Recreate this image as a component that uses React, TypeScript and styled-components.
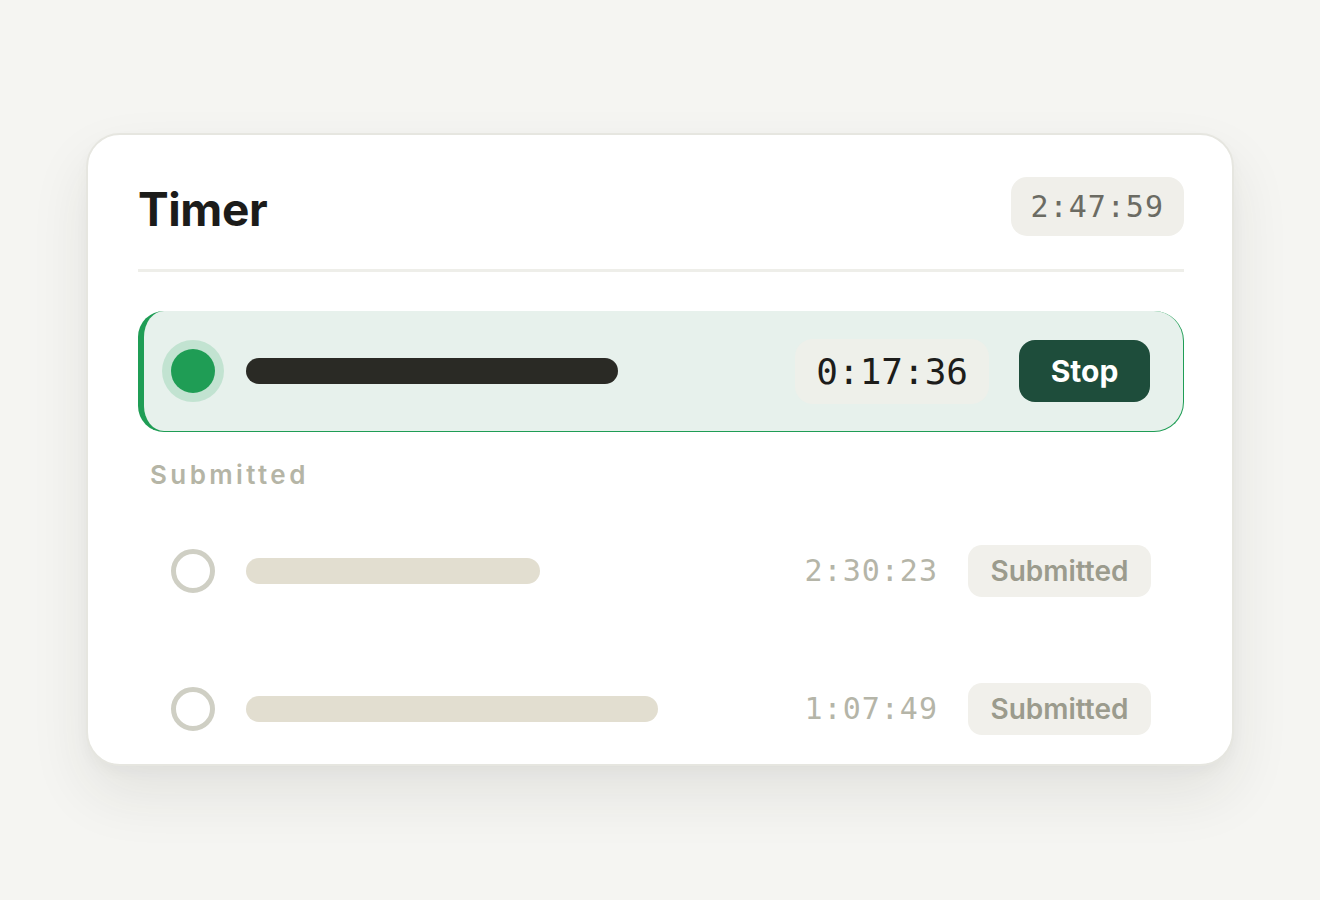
import styled, { createGlobalStyle } from "styled-components";

const GlobalStyle = createGlobalStyle`
  html, body {
    margin: 0;
    padding: 0;
    background: #f5f5f2;
    font-family: Inter, "Noto Sans", sans-serif;
  }
`;

interface Entry {
  time: string;
  width: number;
}

const submitted: Entry[] = [
  { time: "2:30:23", width: 294 },
  { time: "1:07:49", width: 412 },
];

export default function App() {
  return (
    <>
      <GlobalStyle />
      <Page>
        <Card>
          <Header>
            <Title>Timer</Title>
            <TotalPill>2:47:59</TotalPill>
          </Header>
          <Divider />
          <ActiveRow>
            <DotSlot>
              <LiveDot />
            </DotSlot>
            <Bar $w={372} $active />
            <Spacer />
            <TimePill>0:17:36</TimePill>
            <StopButton>Stop</StopButton>
          </ActiveRow>
          <SectionLabel>Submitted</SectionLabel>
          <List>
            {submitted.map((e) => (
              <Row key={e.time}>
                <DotSlot>
                  <EmptyDot />
                </DotSlot>
                <Bar $w={e.width} />
                <Spacer />
                <DoneTime>{e.time}</DoneTime>
                <Badge>Submitted</Badge>
              </Row>
            ))}
          </List>
        </Card>
      </Page>
    </>
  );
}

const Page = styled.div`
  padding: 133px 0 0 86px;
  width: 1320px;
  height: 900px;
  box-sizing: border-box;
`;

const Card = styled.div`
  width: 1148px;
  height: 633px;
  box-sizing: border-box;
  background: #ffffff;
  border: 2px solid #e6e6e0;
  border-radius: 34px;
  padding: 42px 48px 0 50px;
  overflow: hidden;
  box-shadow: 0 28px 60px rgba(40, 44, 38, 0.09), 0 6px 14px rgba(40, 44, 38, 0.03);
`;

const Header = styled.div`
  display: flex;
  align-items: center;
  justify-content: space-between;
  height: 59px;
`;

const Title = styled.h1`
  margin: 0;
  font-size: 46px;
  font-weight: 700;
  letter-spacing: -0.4px;
  color: #1c1c1a;
  line-height: 1;
  padding-top: 4px;
`;

const TotalPill = styled.div`
  height: 59px;
  box-sizing: border-box;
  padding: 0 20px;
  display: flex;
  align-items: center;
  background: #f0efea;
  border-radius: 16px;
  font-family: "DejaVu Sans Mono", monospace;
  font-size: 30px;
  letter-spacing: 1px;
  color: #6b6b63;
`;

const Divider = styled.div`
  height: 3px;
  background: #eeeee9;
  margin: 33px 0 39px;
`;

const ActiveRow = styled.div`
  display: flex;
  align-items: center;
  height: 121px;
  box-sizing: border-box;
  background: #e7f1ec;
  border-radius: 26px 30px 30px 26px;
  border-left: 6px solid #1f9d55;
  border-right: 1px solid #1f9d55;
  border-bottom: 1px solid #1f9d55;
  padding: 0 33px 0 18px;
`;

const DotSlot = styled.div`
  width: 62px;
  height: 62px;
  display: flex;
  align-items: center;
  justify-content: center;
  flex: none;
  margin-right: 22px;
`;

const LiveDot = styled.div`
  width: 44px;
  height: 44px;
  border-radius: 50%;
  background: #1f9d55;
  box-shadow: 0 0 0 9px #c2e3d1;
`;

const EmptyDot = styled.div`
  width: 44px;
  height: 44px;
  box-sizing: border-box;
  border-radius: 50%;
  border: 5px solid #cfcfc4;
`;

const Bar = styled.div<{ $w: number; $active?: boolean }>`
  width: ${(p) => p.$w}px;
  height: 26px;
  border-radius: 13px;
  background: ${(p) => (p.$active ? "#2a2a25" : "#e2ded0")};
  flex: none;
`;

const Spacer = styled.div`
  flex: 1;
`;

const TimePill = styled.div`
  height: 65px;
  box-sizing: border-box;
  padding: 0 21px;
  display: flex;
  align-items: center;
  background: #eef0ea;
  border-radius: 18px;
  font-family: "DejaVu Sans Mono", monospace;
  font-size: 36px;
  color: #1d1d1b;
  margin-right: 30px;
`;

const StopButton = styled.button`
  height: 62px;
  width: 131px;
  border: none;
  border-radius: 16px;
  background: #1e4d3b;
  color: #ffffff;
  font-family: Inter, sans-serif;
  font-size: 30px;
  font-weight: 700;
  padding: 0;
  cursor: pointer;
`;

const SectionLabel = styled.div`
  margin: 27px 0 0 12px;
  font-size: 26px;
  font-weight: 600;
  letter-spacing: 3.4px;
  color: #b5b5a6;
  line-height: 32px;
`;

const List = styled.div`
  display: flex;
  flex-direction: column;
  gap: 17px;
  margin-top: 19px;
`;

const Row = styled.div`
  display: flex;
  align-items: center;
  height: 121px;
  box-sizing: border-box;
  padding: 0 33px 0 24px;
`;

const DoneTime = styled.div`
  font-family: "DejaVu Sans Mono", monospace;
  font-size: 30px;
  letter-spacing: 1px;
  color: #b5b5a8;
  margin-right: 30px;
`;

const Badge = styled.div`
  height: 52px;
  box-sizing: border-box;
  width: 183px;
  display: flex;
  align-items: center;
  justify-content: center;
  background: #f1f0eb;
  border-radius: 14px;
  font-size: 28px;
  font-weight: 600;
  color: #9b9b8d;
`;
